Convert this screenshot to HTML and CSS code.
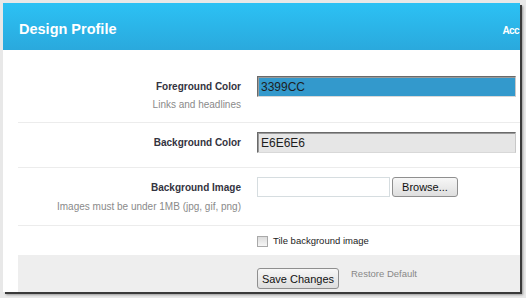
FILE: index.html
```html
<!DOCTYPE html>
<html lang="en">
<head>
    <meta charset="UTF-8">
    <meta name="viewport" content="width=device-width, initial-scale=1.0">
    <title>Design Profile</title>
    <link rel="stylesheet" href="styles.css">
</head>
<body>
    <div class="window">
        <header class="topbar">
            <h1>Design Profile</h1>
            <nav class="topnav"><a href="#">Acc</a></nav>
        </header>

        <form class="profile-form">
            <div class="field-row row-fg">
                <div class="field-label">
                    <label for="fgColor">Foreground Color</label>
                    <p class="hint">Links and headlines</p>
                </div>
                <div class="field-input">
                    <input type="text" id="fgColor" class="color-input color-fg" value="3399CC">
                </div>
            </div>

            <div class="field-row row-bg">
                <div class="field-label">
                    <label for="bgColor">Background Color</label>
                </div>
                <div class="field-input">
                    <input type="text" id="bgColor" class="color-input color-bg" value="E6E6E6">
                </div>
            </div>

            <div class="field-row row-image">
                <div class="field-label">
                    <label for="bgImage">Background Image</label>
                    <p class="hint">Images must be under 1MB (jpg, gif, png)</p>
                </div>
                <div class="field-input file-picker">
                    <input type="text" id="bgImage" class="file-path">
                    <button type="button" class="btn btn-browse">Browse...</button>
                </div>
            </div>

            <div class="field-row row-tile">
                <div class="field-label"></div>
                <div class="field-input">
                    <label class="check"><input type="checkbox" name="tile"> Tile background image</label>
                </div>
            </div>

            <div class="form-actions">
                <button type="submit" class="btn btn-save">Save Changes</button>
                <a href="#" class="restore-link">Restore Default</a>
            </div>
        </form>
    </div>
</body>
</html>
```

FILE: styles.css
```css
* {
    margin: 0;
    padding: 0;
    box-sizing: border-box;
}

body {
    font-family: 'Liberation Sans', Arial, sans-serif;
    background-color: #e8e8e8;
    width: 526px;
    height: 298px;
    overflow: hidden;
}

.window {
    margin: 3px 0 0 3px;
    width: 517px;
    height: 289px;
    background: #fff;
    overflow: hidden;
    box-shadow: 2px 2px 0 #3a3a3a, 3px 3px 2px #999;
}

/* header bar */
.topbar {
    display: flex;
    align-items: center;
    height: 47px;
    padding: 4px 1px 0 16px;
    background: linear-gradient(#2cc1f4, #2aa9dd);
}

.topbar h1 {
    flex: 1;
    font-size: 14.5px;
    font-weight: bold;
    color: #fff;
}

.topnav {
    flex-shrink: 0;
    white-space: nowrap;
}

.topnav a {
    color: #fff;
    font-size: 10px;
    font-weight: bold;
    letter-spacing: -0.6px;
    text-decoration: none;
}

/* form rows */
.field-row {
    display: flex;
    align-items: flex-start;
    margin-left: 15px;
    border-bottom: 1px solid #ececec;
}

.row-fg {
    padding: 26px 0 10px;
}

.row-bg {
    padding: 9px 0 13px;
}

.row-image {
    padding: 9px 0 11px;
}

.row-tile {
    padding: 8px 0 7px;
    border-bottom: none;
}

.field-label {
    width: 223px;
    flex-shrink: 0;
    text-align: right;
}

.field-label label {
    display: block;
    font-size: 10px;
    font-weight: bold;
    line-height: 22px;
    color: #333340;
}

.hint {
    font-size: 10px;
    line-height: 14px;
    color: #8a8a8a;
}

.row-image .hint {
    margin-top: 1px;
}

.field-input {
    margin-left: 16px;
}

.color-input {
    width: 259px;
    height: 21px;
    padding: 1px 3px 0;
    font-family: 'Liberation Sans', Arial, sans-serif;
    font-size: 12px;
    color: #1e1e1e;
    border: 1px solid;
    border-color: #6a6a6a #c8c8c8 #d8d8d8 #6a6a6a;
    box-shadow: inset 1px 1px 0 #9a9a9a;
    outline: none;
}

.color-fg {
    background-color: #3399cc;
}

.color-bg {
    background-color: #e6e6e6;
}

.file-picker {
    display: flex;
    align-items: center;
    gap: 2px;
}

.file-path {
    width: 133px;
    height: 20px;
    border: 1px solid #d6dde0;
    background: #fff;
}

.btn {
    font-family: 'Liberation Sans', Arial, sans-serif;
    font-size: 11px;
    color: #111;
    border: 1px solid #8f8f8f;
    border-radius: 3px;
    background: linear-gradient(#f7f7f7, #dedede);
    cursor: pointer;
}

.btn-browse {
    width: 66px;
    height: 20px;
}

.check {
    display: flex;
    align-items: center;
    font-size: 9.5px;
    line-height: 14px;
    color: #222;
}

.check input {
    appearance: none;
    width: 11px;
    height: 11px;
    margin-right: 5px;
    border: 1px solid #a9a9a9;
    background: linear-gradient(#dcdcdc, #f6f6f6);
}

/* footer */
.form-actions {
    display: flex;
    align-items: flex-start;
    margin-left: 15px;
    height: 38px;
    padding: 13px 0 0 239px;
    background-color: #eeeeee;
}

.btn-save {
    width: 82px;
    height: 21px;
}

.restore-link {
    margin: 0 0 0 12px;
    font-size: 9.5px;
    line-height: 12px;
    color: #888;
    text-decoration: none;
}
```
